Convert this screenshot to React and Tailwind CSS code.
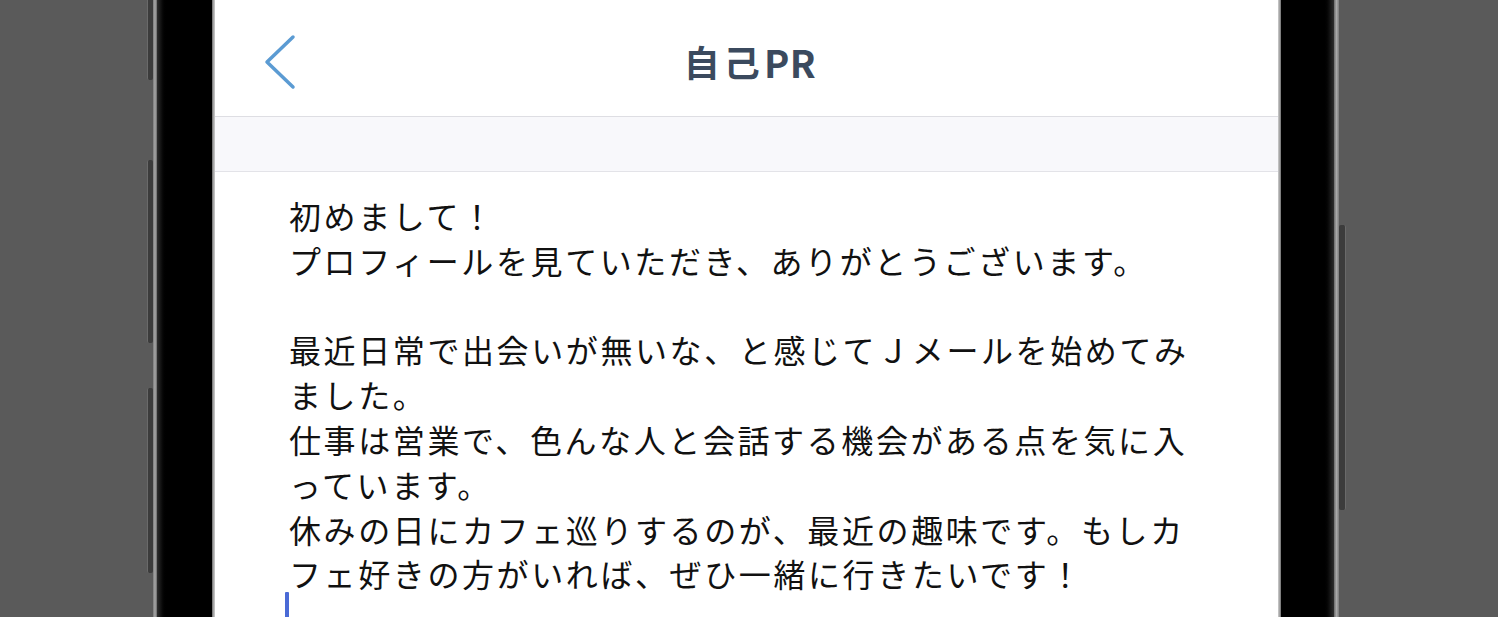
export default function App() {
  const lines = [
    "初めまして！",
    "プロフィールを見ていただき、ありがとうございます。",
    "",
    "最近日常で出会いが無いな、と感じてＪメールを始めてみ",
    "ました。",
    "仕事は営業で、色んな人と会話する機会がある点を気に入",
    "っています。",
    "休みの日にカフェ巡りするのが、最近の趣味です。もしカ",
    "フェ好きの方がいれば、ぜひ一緒に行きたいです！",
  ];
  return (
    <div className="flex h-[617px] w-[1498px] overflow-hidden bg-[#5a5a5a]">
      <div className="w-[147px] shrink-0" />
      <div className="flex w-[6px] shrink-0 flex-col">
        <div className="h-[80px] rounded-b-[2px] border-l border-[#6a6a6a] bg-[#3c3c3c]" />
        <div className="mt-[80px] h-[183px] rounded-[2px] border-l border-[#6a6a6a] bg-[#3c3c3c]" />
        <div className="mt-[45px] h-[185px] rounded-[2px] border-l border-[#6a6a6a] bg-[#3c3c3c]" />
      </div>
      <div className="w-[4px] shrink-0 bg-gradient-to-r from-[#7a7a7a] via-[#a8a8a8] to-[#6a6a6a]" />
      <div className="w-[10px] shrink-0 bg-gradient-to-r from-[#2e2e2e] to-black" />
      <div className="w-[45px] shrink-0 bg-black" />
      <div className="w-[3px] shrink-0 bg-gradient-to-r from-[#6e6e6e] via-[#a6a6a6] to-[#cfcfcf]" />
      <div className="flex w-[1063px] shrink-0 flex-col bg-white">
        <div className="flex h-[117px] shrink-0 border-b border-[#dedee3]">
          <div className="w-[83px] shrink-0 pl-[49px] pt-[32px]">
            <svg width="34" height="60" viewBox="0 0 34 60" fill="none">
              <path d="M29 5 L3 30 L29 55" stroke="#5b9bd3" strokeWidth="3.5" strokeLinecap="round" strokeLinejoin="round" />
            </svg>
          </div>
          <div className="flex flex-1 items-center justify-center pt-[6px] text-[36px] font-bold text-[#3b4a5e] [font-family:'Noto_Sans_CJK_JP','Noto_Sans',sans-serif]">
            <span className="tracking-[4px]">自己</span>
            <span className="text-[38px] tracking-[0.5px]">PR</span>
          </div>
          <div className="w-[76px] shrink-0" />
        </div>
        <div className="h-[55px] shrink-0 border-b border-[#e3e3e8] bg-[#f8f8fb]" />
        <div className="pl-[74px] pt-[21px] text-[32px] leading-[44.8px] tracking-[2.6px] text-[#111] [font-family:'Noto_Sans_CJK_JP','Noto_Sans',sans-serif]">
          {lines.map((l, i) => (
            <div key={i} className="h-[44.8px] whitespace-nowrap">
              {l}
            </div>
          ))}
          <div className="h-[44.8px]">
            <div className="ml-[-4px] mt-[-4px] h-[34px] w-[4px] rounded-[1px] bg-[#4a6ad6]" />
          </div>
        </div>
      </div>
      <div className="w-[3px] shrink-0 bg-gradient-to-r from-[#cfcfcf] via-[#a6a6a6] to-[#6e6e6e]" />
      <div className="w-[42px] shrink-0 bg-black" />
      <div className="w-[11px] shrink-0 bg-gradient-to-r from-black to-[#2e2e2e]" />
      <div className="w-[5px] shrink-0 bg-gradient-to-r from-[#6a6a6a] via-[#a8a8a8] to-[#7a7a7a]" />
      <div className="flex w-[7px] shrink-0 flex-col">
        <div className="mt-[225px] h-[285px] rounded-[2px] border-r border-[#6a6a6a] bg-[#3c3c3c]" />
      </div>
      <div className="flex-1" />
    </div>
  );
}
